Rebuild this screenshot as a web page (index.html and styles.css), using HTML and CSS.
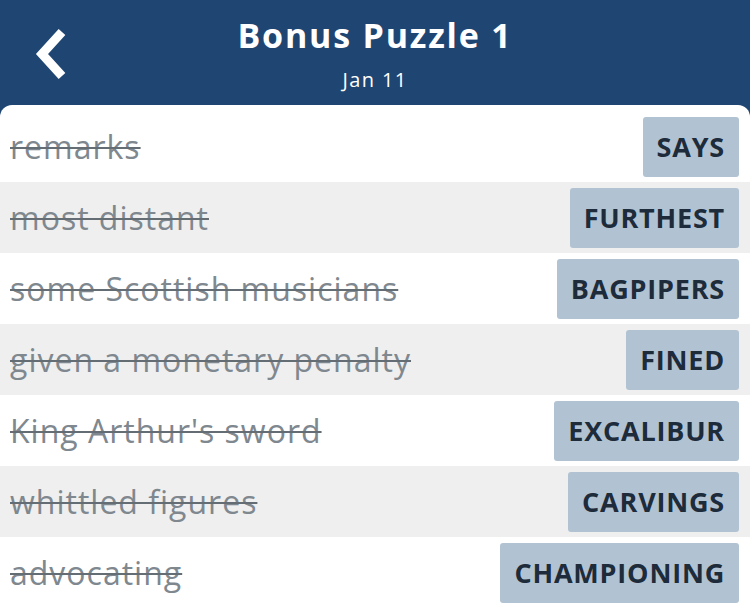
FILE: index.html
```html
<!DOCTYPE html>
<html lang="en">
<head>
    <meta charset="UTF-8">
    <meta name="viewport" content="width=device-width, initial-scale=1.0">
    <title>Bonus Puzzle 1</title>
    <link rel="stylesheet" href="styles.css">
</head>
<body>
    <header class="top-bar">
        <a class="back" href="#" aria-label="Back">
            <svg width="40" height="60" viewBox="0 0 40 60">
                <polyline points="28,8 8,30 28,52" fill="none" stroke="#fff" stroke-width="9" stroke-linecap="butt" stroke-linejoin="miter"/>
            </svg>
        </a>
        <div class="titles">
            <h1>Bonus Puzzle 1</h1>
            <div class="date">Jan 11</div>
        </div>
    </header>

    <ul class="clues">
        <li class="clue"><span class="hint">remarks</span><span class="answer">SAYS</span></li>
        <li class="clue"><span class="hint">most distant</span><span class="answer">FURTHEST</span></li>
        <li class="clue"><span class="hint">some Scottish musicians</span><span class="answer">BAGPIPERS</span></li>
        <li class="clue"><span class="hint">given a monetary penalty</span><span class="answer">FINED</span></li>
        <li class="clue"><span class="hint">King Arthur's sword</span><span class="answer">EXCALIBUR</span></li>
        <li class="clue"><span class="hint">whittled figures</span><span class="answer">CARVINGS</span></li>
        <li class="clue"><span class="hint">advocating</span><span class="answer">CHAMPIONING</span></li>
    </ul>
</body>
</html>
```

FILE: styles.css
```css
body {
    margin: 0;
    background-color: #1f4673;
    font-family: 'Open Sans', 'Lato', sans-serif;
    overflow: hidden;
}

.top-bar {
    height: 105px;
    position: relative;
    color: #fff;
}

.back {
    position: absolute;
    left: 34px;
    top: 24px;
    display: block;
}

.titles {
    text-align: center;
    padding-top: 15px;
}

h1 {
    margin: 0;
    font-size: 34px;
    font-weight: bold;
    line-height: 40px;
    letter-spacing: 1.8px;
}

.date {
    font-size: 20px;
    line-height: 26px;
    margin-top: 12px;
    letter-spacing: 1.4px;
}

.clues {
    list-style: none;
    margin: 0;
    padding: 6px 0 0 0;
    background-color: #fff;
    border-radius: 12px 12px 0 0;
}

.clue {
    height: 71px;
    display: flex;
    align-items: center;
    justify-content: space-between;
    padding: 0 11px 0 10px;
}

.clue:nth-child(even) {
    background-color: #efefef;
}

.hint {
    font-size: 32px;
    letter-spacing: 1px;
    color: #80888f;
    text-decoration: line-through;
    text-decoration-color: #646c74;
    text-decoration-thickness: 2px;
}

.answer {
    background-color: #b1c3d2;
    color: #1d2b3a;
    font-size: 27px;
    font-weight: bold;
    letter-spacing: 0.8px;
    height: 60px;
    line-height: 60px;
    padding: 0 14px;
    border-radius: 3px;
}
```
